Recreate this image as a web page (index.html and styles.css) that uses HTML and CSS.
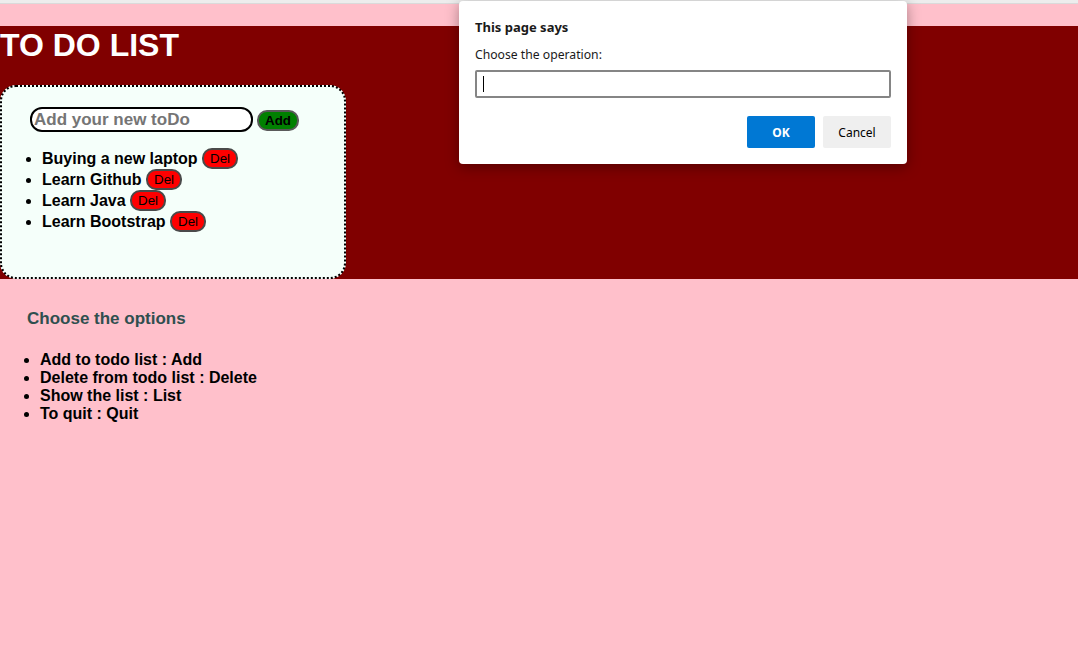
FILE: index.html
```html
<!DOCTYPE html>
<html>
<head>
<meta charset="utf-8">
<title>To Do List</title>
<link rel="stylesheet" href="styles.css">
</head>
<body>
<div class="topbar"></div>
<div class="header">
  <h1 class="title">TO DO LIST</h1>
  <div class="card">
    <div class="form-row">
      <input class="todo-input" type="text" placeholder="Add your new toDo">
      <button class="btn-add">Add</button>
    </div>
    <ul class="todo-list">
      <li>Buying a new laptop <button class="btn-del">Del</button></li>
      <li>Learn Github <button class="btn-del">Del</button></li>
      <li>Learn Java <button class="btn-del">Del</button></li>
      <li>Learn Bootstrap <button class="btn-del">Del</button></li>
    </ul>
  </div>
</div>
<h3 class="options-title">Choose the options</h3>
<ul class="options">
  <li>Add to todo list : Add</li>
  <li>Delete from todo list : Delete</li>
  <li>Show the list : List</li>
  <li>To quit : Quit</li>
</ul>

<div class="dialog">
  <div class="dialog-title">This page says</div>
  <div class="dialog-msg">Choose the operation:</div>
  <div class="dialog-input"><span class="caret"></span></div>
  <div class="dialog-actions">
    <button class="dlg-ok">OK</button>
    <button class="dlg-cancel">Cancel</button>
  </div>
</div>
</body>
</html>
```
FILE: styles.css
```css
html, body {
  margin: 0;
  padding: 0;
}
body {
  background: #ffc0cb;
  font-family: "Liberation Sans", Arial, sans-serif;
  height: 660px;
  overflow: hidden;
  position: relative;
}
.topbar {
  height: 3px;
  background: #ededed;
  border-bottom: 1px solid #dadada;
}
.header {
  margin-top: 22px;
  background: #800000;
}
.title {
  margin: 0 0 22px 0;
  padding-top: 1px;
  font-size: 32px;
  font-weight: bold;
  color: #ffffff;
  line-height: 36px;
}
.card {
  box-sizing: border-box;
  width: 346px;
  height: 194px;
  margin-left: 0;
  border: 2px dotted #000;
  border-radius: 16px;
  background: #f5fffa;
  padding-top: 20px;
}
.form-row {
  display: flex;
  align-items: center;
  gap: 4px;
  padding-left: 28px;
}
.todo-input {
  box-sizing: border-box;
  width: 223px;
  height: 25px;
  border: 2px solid #000;
  border-radius: 12px;
  padding: 0 2px;
  font-family: "Liberation Sans", Arial, sans-serif;
  font-size: 17px;
  font-weight: bold;
  background: #fff;
  outline: none;
}
.todo-input::placeholder {
  color: #757575;
}
.btn-add {
  box-sizing: border-box;
  height: 21px;
  margin-top: 2px;
  padding: 0 6px;
  font-family: "Liberation Sans", Arial, sans-serif;
  font-size: 13.333px;
  font-weight: bold;
  color: #000;
  background: #008000;
  border: 2px solid #5a5a5a;
  border-radius: 10px;
}
.todo-list {
  margin: 16px 0 0 0;
  padding-left: 40px;
  font-size: 16px;
  font-weight: bold;
  color: #000;
}
.todo-list li {
  height: 21px;
  line-height: 21px;
}
.btn-del {
  box-sizing: border-box;
  height: 21px;
  padding: 0 6px;
  font-family: "Liberation Sans", Arial, sans-serif;
  font-size: 13.333px;
  font-weight: normal;
  color: #000;
  background: #ff0000;
  border: 2px solid #4a4a4a;
  border-radius: 10px;
  vertical-align: middle;
  position: relative;
  top: -1px;
}
.options-title {
  margin: 30px 0 0 27px;
  font-size: 17px;
  font-weight: bold;
  color: #2f4f4f;
  line-height: 20px;
}
.options {
  margin: 22px 0 0 0;
  padding-left: 40px;
  font-size: 16px;
  font-weight: bold;
  line-height: 18px;
  color: #000;
}

/* dialog */
.dialog {
  position: absolute;
  top: 1px;
  left: 459px;
  width: 448px;
  height: 163px;
  box-sizing: border-box;
  background: #fff;
  border-radius: 4px;
  box-shadow: 0 3px 14px rgba(0, 0, 0, 0.35);
  padding: 17px 16px 0 16px;
  font-family: "Noto Sans", "Open Sans", sans-serif;
  color: #1a1a1a;
}
.dialog-title {
  font-size: 13px;
  font-weight: bold;
  line-height: 18px;
}
.dialog-msg {
  margin-top: 10px;
  font-size: 12.2px;
  line-height: 17px;
}
.dialog-input {
  box-sizing: border-box;
  margin-top: 7px;
  height: 28px;
  border: 2px solid #858585;
  border-radius: 2px;
  display: flex;
  align-items: center;
  padding-left: 6px;
}
.caret {
  width: 1px;
  height: 16px;
  background: #000;
}
.dialog-actions {
  margin-top: 18px;
  display: flex;
  justify-content: flex-end;
  gap: 8px;
}
.dlg-ok, .dlg-cancel {
  width: 68px;
  height: 32px;
  border: none;
  border-radius: 2px;
  font-family: "Noto Sans", "Open Sans", sans-serif;
  font-size: 12px;
}
.dlg-ok {
  background: #0078d4;
  color: #fff;
  font-weight: bold;
}
.dlg-cancel {
  background: #efefef;
  color: #000;
}
```
